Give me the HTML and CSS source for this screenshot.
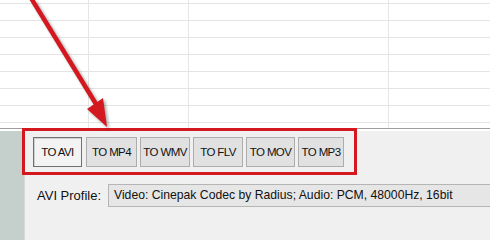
FILE: index.html
```html
<!DOCTYPE html>
<html>
<head>
<meta charset="utf-8">
<link rel="stylesheet" href="styles.css">
</head>
<body>
<div class="sheet">
  <div class="col c1"></div>
  <div class="col c2"></div>
  <div class="col c3"></div>
  <div class="col c4"></div>
</div>
<div class="bottom">
  <div class="strip"></div>
  <div class="main">
    <div class="toolbar">
      <button class="btn pressed w-avi">TO AVI</button>
      <button class="btn w-mp4">TO MP4</button>
      <button class="btn w-wmv">TO WMV</button>
      <button class="btn w-flv">TO FLV</button>
      <button class="btn w-mov">TO MOV</button>
      <button class="btn w-mp3">TO MP3</button>
    </div>
    <div class="profile">
      <span class="label">AVI Profile:</span>
      <div class="combo">Video: Cinepak Codec by Radius; Audio: PCM, 48000Hz, 16bit</div>
    </div>
  </div>
</div>
<div class="highlight"></div>
<svg class="arrow" width="490" height="240" viewBox="0 0 490 240">
  <line x1="31" y1="-2" x2="96" y2="104" stroke="#d3191f" stroke-width="4.5"/>
  <polygon points="87,109 103,98 107,127" fill="#d3191f"/>
</svg>
</body>
</html>
```

FILE: styles.css
```css
* { box-sizing: border-box; }
html, body { margin: 0; padding: 0; }
body {
  width: 490px;
  height: 240px;
  overflow: hidden;
  position: relative;
  background: #fff;
  font-family: "Liberation Sans", Arial, sans-serif;
  color: #111;
}
.sheet {
  height: 128px;
  display: flex;
  background: repeating-linear-gradient(to bottom, transparent 0 3px, #e4e4e4 3px 4px, transparent 4px 17px);
}
.col { border-right: 1px solid #e6e6e6; height: 100%; }
.c1 { width: 89px; }
.c2 { width: 100px; }
.c3 { width: 200px; }
.c4 { flex: 1; border-right: none; }
.bottom {
  height: 112px;
  border-top: 1px solid #9d9d9d;
  padding-top: 2px;
  background: #fff;
  display: flex;
}
.strip { width: 24px; background: #c5d0cc; }
.main {
  flex: 1;
  background: #f0f0f0;
  border-left: 1px solid #d9d9d9;
  padding: 6px 0 0 8px;
}
.toolbar { display: flex; gap: 3px; height: 30px; }
.btn {
  height: 30px;
  margin: 0;
  padding: 0;
  border: 1px solid #adadad;
  background: #e1e1e1;
  font-family: "Liberation Sans", Arial, sans-serif;
  font-size: 11.5px;
  letter-spacing: -0.6px;
  color: #111;
}
.btn.pressed {
  border-color: #707070;
  background: #f3f3f3;
  box-shadow: inset 1px 1px 0 #cfcfcf;
}
.w-avi { width: 49px; }
.w-mp4 { width: 51px; margin-left: 1px; }
.w-wmv { width: 50px; }
.w-flv { width: 50px; }
.w-mov { width: 49px; }
.w-mp3 { width: 46px; }
.profile {
  margin-top: 17px;
  display: flex;
  align-items: center;
}
.label {
  font-size: 13px;
  margin-left: 4px;
  width: 71px;
}
.combo {
  height: 23px;
  flex: 1;
  margin-right: -4px;
  background: #e6e6e6;
  border: 1px solid #b5b5b5;
  font-size: 12.2px;
  line-height: 21px;
  padding-left: 5px;
  white-space: nowrap;
}
.highlight {
  position: absolute;
  left: 22px;
  top: 128px;
  width: 335px;
  height: 47px;
  border: 3px solid #d3191f;
}
.arrow {
  position: absolute;
  left: 0;
  top: 0;
  filter: drop-shadow(2px 2px 1.5px rgba(0,0,0,0.35));
}
```
